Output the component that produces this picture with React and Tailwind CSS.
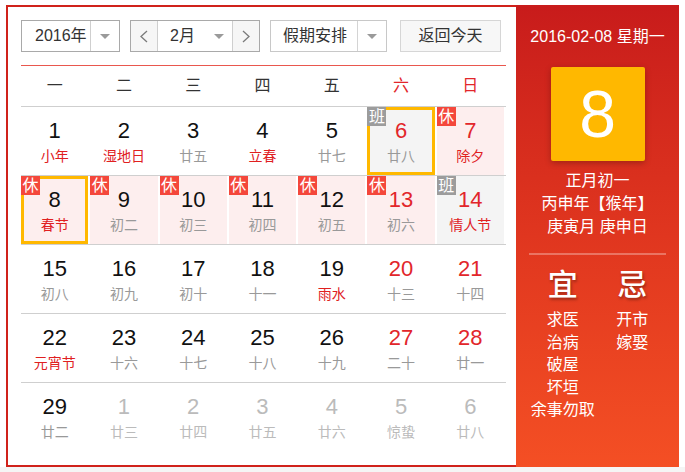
import React from 'react';

const FONT = "font-['Liberation_Sans','Noto_Sans_CJK_SC',sans-serif]";

const weeks = [
  [
    { d: 1, l: '小年', lr: true },
    { d: 2, l: '湿地日', lr: true },
    { d: 3, l: '廿五' },
    { d: 4, l: '立春', lr: true },
    { d: 5, l: '廿七' },
    { d: 6, l: '廿八', dr: true, tag: '班', grey: true, sel: true },
    { d: 7, l: '除夕', dr: true, lr: true, tag: '休' },
  ],
  [
    { d: 8, l: '春节', lr: true, tag: '休', sel: true },
    { d: 9, l: '初二', tag: '休' },
    { d: 10, l: '初三', tag: '休' },
    { d: 11, l: '初四', tag: '休' },
    { d: 12, l: '初五', tag: '休' },
    { d: 13, l: '初六', dr: true, tag: '休' },
    { d: 14, l: '情人节', dr: true, lr: true, tag: '班', grey: true },
  ],
  [
    { d: 15, l: '初八' },
    { d: 16, l: '初九' },
    { d: 17, l: '初十' },
    { d: 18, l: '十一' },
    { d: 19, l: '雨水', lr: true },
    { d: 20, l: '十三', dr: true },
    { d: 21, l: '十四', dr: true },
  ],
  [
    { d: 22, l: '元宵节', lr: true },
    { d: 23, l: '十六' },
    { d: 24, l: '十七' },
    { d: 25, l: '十八' },
    { d: 26, l: '十九' },
    { d: 27, l: '二十', dr: true },
    { d: 28, l: '廿一', dr: true },
  ],
  [
    { d: 29, l: '廿二' },
    { d: 1, l: '廿三', other: true },
    { d: 2, l: '廿四', other: true },
    { d: 3, l: '廿五', other: true },
    { d: 4, l: '廿六', other: true },
    { d: 5, l: '惊蛰', other: true },
    { d: 6, l: '廿八', other: true },
  ],
];

function Caret() {
  return (
    <svg width="10" height="5" viewBox="0 0 10 5">
      <path d="M0 0 L10 0 L5 5 Z" fill="#9a9a9a" />
    </svg>
  );
}

function Chevron({ right }) {
  return (
    <svg width="8" height="13" viewBox="0 0 8 13">
      <polyline
        points={right ? '1,1 7,6.5 1,12' : '7,1 1,6.5 7,12'}
        fill="none"
        stroke="#7a7a7a"
        strokeWidth="1.3"
      />
    </svg>
  );
}

function Cell({ c }) {
  let bg = '';
  if (c.grey) bg = 'bg-[#f4f4f4]';
  else if (c.tag === '休') bg = 'bg-[#fdeeee]';

  let numColor = 'text-[#111]';
  if (c.other) numColor = 'text-[#bbb]';
  else if (c.dr) numColor = 'text-[#e2262b]';

  let lunarColor = 'text-[#999]';
  if (c.other) lunarColor = 'text-[#bbb]';
  else if (c.lr) lunarColor = 'text-[#e0201f]';

  return (
    <div className={`relative mr-[2px] h-[68px] ${bg}`}>
      {c.sel && <div className="absolute inset-0 border-[3px] border-[#ffb800]" />}
      {c.tag && (
        <div
          className={`absolute left-0 top-0 h-[19px] w-[19px] text-center text-[16px] leading-[19px] text-white ${
            c.tag === '休' ? 'bg-[#f4473b]' : 'bg-[#9c9c9c]'
          }`}
        >
          {c.tag}
        </div>
      )}
      <div className={`pt-[12px] text-center text-[22px] leading-[24px] ${numColor}`}>{c.d}</div>
      <div className={`mt-[4px] text-center text-[14px] leading-[18px] ${lunarColor}`}>{c.l}</div>
    </div>
  );
}

export default function App() {
  return (
    <div className={`${FONT} bg-white`}>
      <div className="pl-[6px] pt-[5px]">
        <div className="flex h-[462px] w-[673px]">
          {/* calendar */}
          <div className="w-[510px] border-y-2 border-l-2 border-[#d0221b] pl-[13px] pr-[10px] pt-[13px]">
            <div className="flex h-[32px] text-[16px] text-[#333]">
              <div className="flex border border-[#a9a9a9]">
                <div className="w-[68px] pl-[13px] leading-[30px]">2016年</div>
                <div className="flex w-[29px] items-center justify-center border-l border-[#cfcfcf]">
                  <Caret />
                </div>
              </div>
              <div className="ml-[10px] flex border border-[#a9a9a9]">
                <div className="flex w-[26px] items-center justify-center bg-[#f6f6f6]">
                  <Chevron />
                </div>
                <div className="flex w-[76px] items-center border-x border-[#cfcfcf] pl-[12px]">
                  <span className="w-[44px] leading-[30px]">2月</span>
                  <Caret />
                </div>
                <div className="flex w-[26px] items-center justify-center bg-[#f6f6f6]">
                  <Chevron right />
                </div>
              </div>
              <div className="ml-[10px] flex border border-[#c8c8c8]">
                <div className="w-[86px] pl-[12px] leading-[30px]">假期安排</div>
                <div className="flex w-[29px] items-center justify-center border-l border-[#d4d4d4]">
                  <Caret />
                </div>
              </div>
              <div className="ml-[13px] w-[101px] border border-[#d6d6d6] bg-[#f7f7f7] text-center leading-[30px]">
                返回今天
              </div>
            </div>

            <div className="mt-[13px] grid h-[42px] grid-cols-7 border-y border-t-[#e9574e] border-b-[#cfcfcf] text-[16px] leading-[40px] text-[#333]">
              {['一', '二', '三', '四', '五', '六', '日'].map((w, i) => (
                <div key={w} className={`mr-[2px] text-center ${i > 4 ? 'text-[#e2262b]' : ''}`}>
                  {w}
                </div>
              ))}
            </div>

            {weeks.map((row, ri) => (
              <div
                key={ri}
                className={`grid grid-cols-7 ${ri < weeks.length - 1 ? 'border-b border-[#cfcfcf]' : ''}`}
              >
                {row.map((c, ci) => (
                  <Cell key={ci} c={c} />
                ))}
              </div>
            ))}
          </div>

          {/* side panel */}
          <div className="w-[163px] bg-linear-to-b from-[#c81b1b] via-[#e0361f] to-[#f44f24] pt-[22px] text-white">
            <div className="text-center text-[16px] leading-[20px]">2016-02-08 星期一</div>
            <div className="mx-auto mt-[20px] flex h-[94px] w-[94px] items-center justify-center rounded-[2px] bg-[#ffb800] text-[66px] leading-none shadow-[0_2px_6px_rgba(0,0,0,0.25)]">
              8
            </div>
            <div className="mt-[8px] text-center text-[16px] leading-[23px]">
              <div>正月初一</div>
              <div>丙申年【猴年】</div>
              <div>庚寅月 庚申日</div>
            </div>
            <div className="mx-[13px] mt-[15px] h-[2px] bg-white/30" />
            <div className="mt-[13px] grid grid-cols-2 px-[12px]">
              <div className="text-center">
                <div className="text-[30px] font-medium leading-[34px] [text-shadow:1px_2px_3px_rgba(0,0,0,0.35)]">宜</div>
                <div className="mt-[7px] text-[16px] leading-[22.5px]">
                  <div>求医</div>
                  <div>治病</div>
                  <div>破屋</div>
                  <div>坏垣</div>
                  <div>余事勿取</div>
                </div>
              </div>
              <div className="text-center">
                <div className="text-[30px] font-medium leading-[34px] [text-shadow:1px_2px_3px_rgba(0,0,0,0.35)]">忌</div>
                <div className="mt-[7px] text-[16px] leading-[22.5px]">
                  <div>开市</div>
                  <div>嫁娶</div>
                </div>
              </div>
            </div>
          </div>
        </div>
      </div>
      <div className="h-[5px] bg-[#f5f5f5]" />
    </div>
  );
}
